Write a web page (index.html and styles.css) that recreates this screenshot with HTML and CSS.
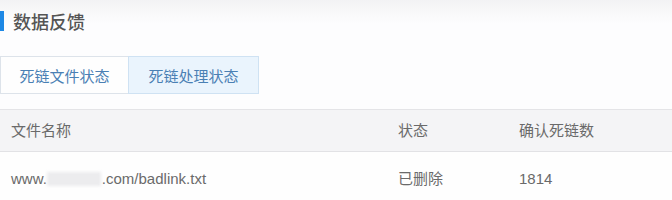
FILE: index.html
```html
<!DOCTYPE html>
<html lang="zh-CN">
<head>
<meta charset="utf-8">
<link rel="stylesheet" href="styles.css">
</head>
<body>
<div class="page">
  <div class="title-row">
    <span class="title-bar"></span>
    <h1 class="title">数据反馈</h1>
  </div>
  <div class="tabs">
    <div class="tab">死链文件状态</div>
    <div class="tab tab-active">死链处理状态</div>
  </div>
  <div class="table">
    <div class="row row-head">
      <div class="cell">文件名称</div>
      <div class="cell">状态</div>
      <div class="cell">确认死链数</div>
    </div>
    <div class="row row-body">
      <div class="cell cell-url">www.<span class="blur"></span>.com/badlink.txt</div>
      <div class="cell">已删除</div>
      <div class="cell">1814</div>
    </div>
  </div>
</div>
</body>
</html>
```
FILE: styles.css
```css
html, body {
  margin: 0;
  padding: 0;
}
body {
  width: 672px;
  height: 200px;
  overflow: hidden;
  background: linear-gradient(to bottom, #f2f2f4 0px, #fafafb 16px, #fdfdfe 24px, #fdfdfe 100%);
  font-family: "Liberation Sans", "Noto Sans CJK SC", sans-serif;
  color: #666;
}
.page {
  padding-top: 11px;
}
.title-row {
  display: flex;
  align-items: center;
  height: 20px;
}
.title-bar {
  width: 4px;
  height: 20px;
  background: #1e88e5;
}
.title {
  margin: 0 0 0 9px;
  font-size: 18px;
  font-weight: 500;
  color: #555;
  line-height: 20px;
  font-family: "Noto Sans CJK SC", sans-serif;
}
.tabs {
  display: flex;
  margin-top: 25px;
}
.tab {
  box-sizing: border-box;
  width: 129px;
  height: 38px;
  border: 1px solid #dde3ea;
  background: #fefefe;
  color: #4a80b4;
  font-size: 15px;
  font-family: "Noto Sans CJK SC", sans-serif;
  display: flex;
  align-items: center;
  justify-content: center;
  line-height: 1;
}
.tab-active {
  width: 131px;
  margin-left: -1px;
  background: #eaf4fd;
  border-color: #cfe2f3;
}
.table {
  margin-top: 15px;
  border-top: 1px solid #e4e4e7;
}
.row {
  display: grid;
  grid-template-columns: 387px 121px 1fr;
  padding-left: 11px;
  align-items: center;
  font-size: 15px;
}
.row-head {
  height: 41px;
  background: #f4f4f6;
  border-bottom: 1px solid #e2e2e5;
  color: #6a6a6a;
}
.row-body {
  height: 52px;
  background: #fefefe;
  color: #6a6a6a;
}
.cell {
  white-space: nowrap;
  line-height: 1;
}
.blur {
  display: inline-block;
  width: 54px;
  height: 14px;
  margin: 0 1px 0 0;
  vertical-align: -2px;
  background: #ececee;
  filter: blur(1.5px);
}
```
